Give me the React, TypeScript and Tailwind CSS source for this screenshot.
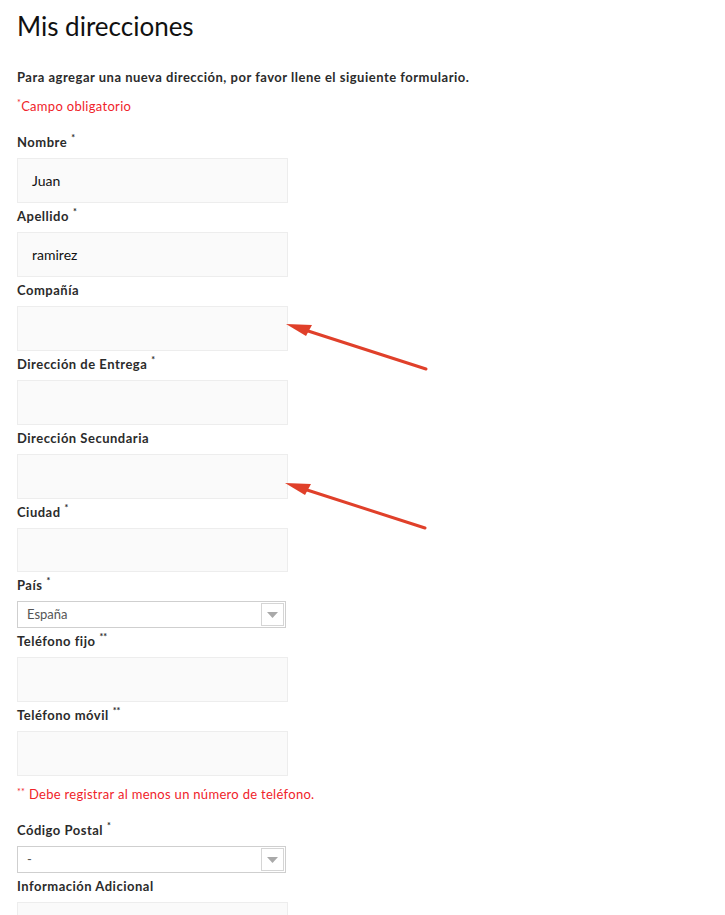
const font = { fontFamily: 'Lato, "Open Sans", sans-serif' }

function Label({ text, mark }: { text: string; mark?: string }) {
  return (
    <div className="h-[29px] pt-[4px] text-[13px] font-bold leading-[18px] tracking-[0.5px] text-[#2b2b2b]">
      {text}
      {mark && <span className="relative -top-[6px] ml-[4px] text-[9px] tracking-normal">{mark}</span>}
    </div>
  )
}

function Input({ value, h = 'h-[45px]' }: { value?: string; h?: string }) {
  return (
    <div className={`${h} flex w-[271px] items-center border border-[#ededed] bg-[#fafafa] pl-[14px] text-[14px] text-[#111]`}>
      {value}
    </div>
  )
}

function Select({ value }: { value: string }) {
  return (
    <div className="flex h-[27px] w-[269px] items-center justify-between border border-[#cfcfcf] bg-white pl-[9px] pr-[1px] text-[13px] text-[#555]">
      <span>{value}</span>
      <div className="flex h-[23px] w-[23px] items-center justify-center border border-[#d5d5d5] bg-white">
        <svg width="11" height="6" viewBox="0 0 11 6">
          <path d="M0 0h11L5.5 6z" fill="#a9a9a9" />
        </svg>
      </div>
    </div>
  )
}

function Arrow({ className }: { className: string }) {
  return (
    <svg className={`pointer-events-none absolute ${className}`} width="150" height="52" viewBox="0 0 150 52">
      <line x1="20" y1="7" x2="141" y2="46" stroke="#e0402a" strokeWidth="3" strokeLinecap="round" />
      <path d="M1 1 L27 2 L21 13 Z" fill="#e0402a" />
    </svg>
  )
}

export default function App() {
  return (
    <div className="relative min-h-[915px] w-[725px] bg-white px-[17px]" style={font}>
      <h1 className="pt-[10px] text-[26px] font-normal leading-[32px] text-[#111]">Mis direcciones</h1>
      <p className="mt-[26px] text-[13px] font-bold leading-[18px] tracking-[0.5px] text-[#2b2b2b]">
        Para agregar una nueva dirección, por favor llene el siguiente formulario.
      </p>
      <p className="mt-[11px] text-[13px] leading-[18px] tracking-[0.3px] text-[#f0232a]">
        <span className="relative -top-[5px] text-[9px]">*</span>Campo obligatorio
      </p>
      <div className="mt-[12px]">
        <Label text="Nombre" mark="*" />
        <Input value="Juan" />
        <Label text="Apellido" mark="*" />
        <Input value="ramirez" />
        <Label text="Compañía" />
        <Input />
        <Label text="Dirección de Entrega" mark="*" />
        <Input />
        <Label text="Dirección Secundaria" />
        <Input />
        <Label text="Ciudad" mark="*" />
        <Input h="h-[44px]" />
        <Label text="País" mark="*" />
        <Select value="España" />
        <Label text="Teléfono fijo" mark="**" />
        <Input />
        <Label text="Teléfono móvil" mark="**" />
        <Input />
        <div className="mt-[9px] mb-[14px] h-[18px] text-[13px] leading-[18px] tracking-[0.3px] text-[#f0232a]">
          <span className="relative -top-[4px] text-[9px]">**</span> Debe registrar al menos un número de teléfono.
        </div>
        <Label text="Código Postal" mark="*" />
        <Select value="-" />
        <Label text="Información Adicional" />
        <Input />
      </div>
      <Arrow className="left-[285px] top-[323px]" />
      <Arrow className="left-[284px] top-[482px]" />
    </div>
  )
}
